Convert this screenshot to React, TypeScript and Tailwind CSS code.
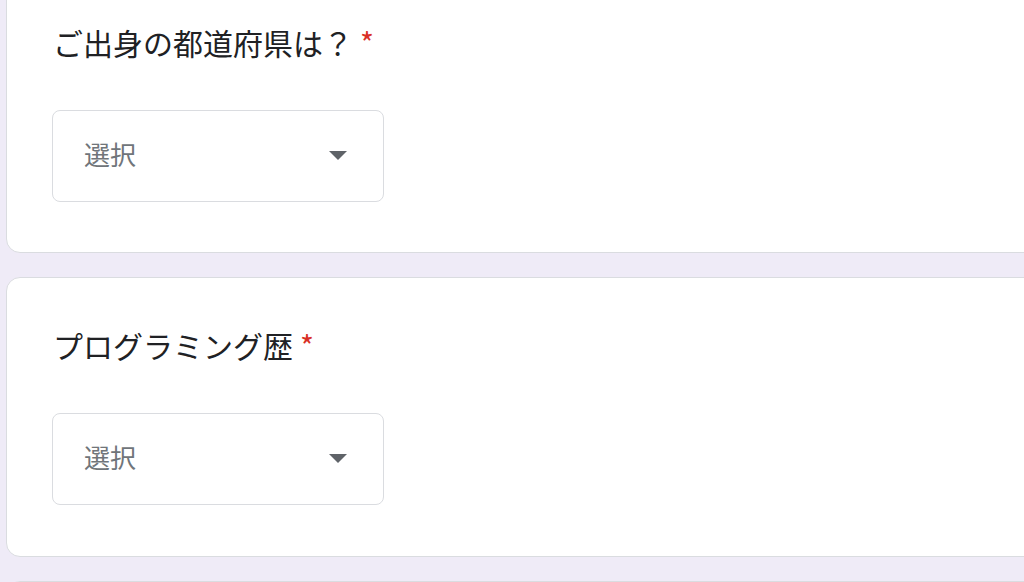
import React from "react";

function Question({ title, first }: { title: string; first?: boolean }) {
  return (
    <div
      className={`bg-white border border-[#dadce0] rounded-[14px] ml-[6px] mr-[-20px] pl-[45px] pt-[47px] ${first ? "-mt-[26px] pb-[50px]" : "pb-[51px]"}`}
    >
      <div className="text-[30px] leading-[40px] text-[#202124]" style={{ fontFamily: '"Noto Sans CJK JP", "Noto Sans", sans-serif' }}>
        <span className="ml-[1px]">{title}</span>
        <span className="text-[#d93025] ml-[7px]">*</span>
      </div>
      <div className="mt-[48px] w-[332px] h-[92px] border border-[#dadce0] rounded-[8px] flex items-center justify-between pl-[31px] pr-[36px]">
        <span className="text-[26px] leading-[36px] mb-[5px] text-[#70757a]" style={{ fontFamily: '"Noto Sans CJK JP", "Noto Sans", sans-serif' }}>
          選択
        </span>
        <svg width="18" height="9" viewBox="0 0 18 9" className="mb-[2px]">
          <path d="M0 0 L18 0 L9 9 Z" fill="#5f6368" />
        </svg>
      </div>
    </div>
  );
}

export default function App() {
  return (
    <div className="w-[1024px] h-[582px] overflow-hidden bg-[#efebf7]">
      <div className="flex flex-col gap-[24px]">
        <Question title="ご出身の都道府県は？" first />
        <Question title="プログラミング歴" />
        <div className="bg-white border border-[#dadce0] rounded-[14px] ml-[6px] mr-[-20px] h-[100px]" />
      </div>
    </div>
  );
}
